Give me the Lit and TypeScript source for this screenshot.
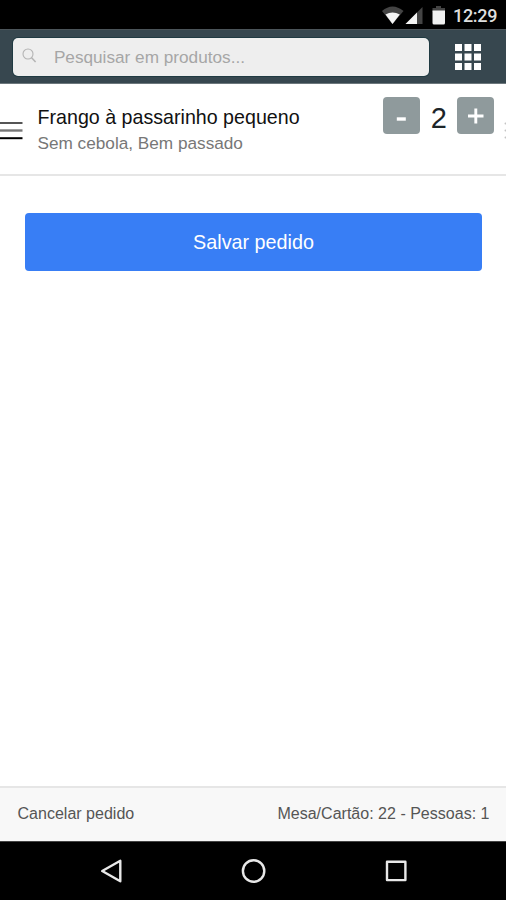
import { LitElement, html, css, svg } from "lit";
import { customElement, state } from "lit/decorators.js";

@customElement("status-bar")
class StatusBar extends LitElement {
  static styles = css`
    :host { display: flex; height: 29px; background: #000; justify-content: flex-end; box-sizing: border-box; padding-right: 8px; }
    .icons { display: block; width: 66px; height: 29px; margin-right: 5px; }
    .time { width: 45px; font: 500 18px/32px Roboto, sans-serif; color: #dedede; white-space: nowrap; letter-spacing: -0.3px; }
  `;
  render() {
    return html`
      <svg class="icons" viewBox="382 0 66 29">
        <path d="M382 11 Q392.500 2 403.500 11 L392.500 24Z" fill="#444" />
        <path d="M385.500 14.500 Q392.500 10.500 399.800 14.500 L392.500 24Z" fill="#f4f4f4" />
        <path d="M422.500 7V24H405.500Z" fill="#444" />
        <path d="M417 12.500V24H405.500Z" fill="#f4f4f4" />
        <path d="M436 6h5v2h4v4h-12.500v-4h3.500z" fill="#444" />
        <path d="M432.500 10.500h12.500v12.500q0 1.500-1.500 1.500h-9.500q-1.500 0-1.500-1.500z" fill="#f0f0f0" />
      </svg>
      <span class="time">12:29</span>
    `;
  }
}

@customElement("search-header")
class SearchHeader extends LitElement {
  static styles = css`
    :host { display: flex; box-sizing: border-box; height: 55px; padding: 7.5px 25px 0 13.4px; background: #37474f; border-top: 1px solid #4b5459; border-bottom: 1px solid #6c777c; justify-content: space-between; }
    .field { display: flex; width: 416px; height: 38.5px; box-sizing: border-box; background: #eee; border-radius: 5px; box-shadow: 0 0 0 1px #203a42; }
    .glass { width: 16px; height: 16px; margin: 10px 15.5px 0 9px; }
    .hint { font: 17.2px/39px "Liberation Sans", Arial, sans-serif; color: #a6a6a6; white-space: nowrap; }
    .grid { width: 26px; height: 26px; margin-top: 6.5px; }
  `;
  render() {
    const steps = [0, 9.5, 19];
    return html`
      <div class="field">
        <svg class="glass" viewBox="0 0 16 16" fill="none" stroke="#b4b4b4" stroke-width="1.100">
          <circle cx="6" cy="6" r="5" />
          <path d="M9.600 9.700 13.600 14" stroke-width="1.600" />
        </svg>
        <span class="hint">Pesquisar em produtos...</span>
      </div>
      <svg class="grid" viewBox="0 0 26 26" fill="#fff">
        ${steps.map((y) => steps.map((x) => svg`<rect x=${x} y=${y} width="7" height="7" />`))}
      </svg>
    `;
  }
}

@customElement("order-item")
class OrderItem extends LitElement {
  static styles = css`
    :host { display: flex; height: 92px; box-sizing: border-box; border-bottom: 2px solid #e6e6e6; background: #fff; font-family: "Liberation Sans", Arial, sans-serif; }
    .handle { width: 23px; height: 20px; margin-top: 37px; flex: none; }
    .text { margin-left: 14.5px; flex: 1; padding-top: 20px; white-space: nowrap; }
    .name { font-size: 19.65px; line-height: 26px; color: #111; }
    .note { font-size: 17.2px; line-height: 26px; color: #777; }
    .stepper { display: flex; height: 37px; margin-top: 13.3px; }
    .key { width: 37px; height: 37px; border-radius: 4px; background: #8f9a9c; }
    .key svg { display: block; width: 37px; height: 37px; }
    .count { width: 37px; text-align: center; font-size: 29px; line-height: 42px; color: #1d2529; }
    .more { width: 3px; height: 20px; margin: 37px 0 0 8.6px; }
  `;
  @state() private count = 2;
  render() {
    return html`
      <svg class="handle" viewBox="0 0 23 20">
        <path d="M0 2H22.500" stroke="#555" stroke-width="2" />
        <path d="M0 9.500H22.500" stroke="#777" stroke-width="2.400" />
        <path d="M0 17.200H22.500" stroke="#000" stroke-width="2" />
      </svg>
      <div class="text">
        <div class="name">Frango à passarinho pequeno</div>
        <div class="note">Sem cebola, Bem passado</div>
      </div>
      <div class="stepper">
        <div class="key" @click=${() => (this.count = Math.max(0, this.count - 1))}>
          <svg viewBox="0 0 37 37"><path d="M13.800 22h9" stroke="#fff" stroke-width="3.400" /></svg>
        </div>
        <div class="count">${this.count}</div>
        <div class="key" @click=${() => (this.count += 1)}>
          <svg viewBox="0 0 37 37"><path d="M11 19h15.500M18.800 11.500v15" stroke="#fff" stroke-width="2.900" /></svg>
        </div>
      </div>
      <svg class="more" viewBox="0 0 3 20" fill="#c4c4c4">
        <circle cx="2.600" cy="2.500" r="1.100" /><circle cx="2.600" cy="9.500" r="1.100" /><circle cx="2.600" cy="16.500" r="1.100" />
      </svg>
    `;
  }
}

@customElement("nav-bar")
class NavBar extends LitElement {
  static styles = css`
    :host { display: flex; justify-content: space-between; height: 59px; box-sizing: border-box; padding: 16px 97px 0 98px; background: #000; border-top: 1px solid #444; }
    svg { width: 26px; height: 26px; fill: none; stroke: #e8e8e8; stroke-width: 2.4; stroke-linejoin: round; }
  `;
  render() {
    return html`
      <svg viewBox="0 0 26 26"><path d="M22.300 2.800V23.200L4.200 13Z" /></svg>
      <svg viewBox="0 0 26 26"><circle cx="12.600" cy="13" r="10.700" /></svg>
      <svg viewBox="0 0 26 26"><rect x="4" y="3.700" width="18.400" height="18.400" /></svg>
    `;
  }
}

@customElement("app-root")
class AppRoot extends LitElement {
  static styles = css`
    :host { display: flex; flex-direction: column; width: 506px; height: 900px; overflow: hidden; background: #fff; font-family: "Liberation Sans", Arial, sans-serif; }
    .body { flex: 1; padding: 37px 24px 0 25px; }
    .save { height: 58px; border-radius: 4px; background: #387ef5; color: #fff; font-size: 19.75px; line-height: 58px; text-align: center; }
    .footer { display: flex; justify-content: space-between; height: 55px; box-sizing: border-box; padding: 0 16.5px 0 17.5px; border-top: 2px solid #e6e6e6; background: #f8f8f8; color: #555; font-size: 16.05px; line-height: 50px; white-space: nowrap; }
  `;
  render() {
    return html`
      <status-bar></status-bar>
      <search-header></search-header>
      <order-item></order-item>
      <div class="body"><div class="save">Salvar pedido</div></div>
      <div class="footer"><span>Cancelar pedido</span><span>Mesa/Cartão: 22 - Pessoas: 1</span></div>
      <nav-bar></nav-bar>
    `;
  }
}
